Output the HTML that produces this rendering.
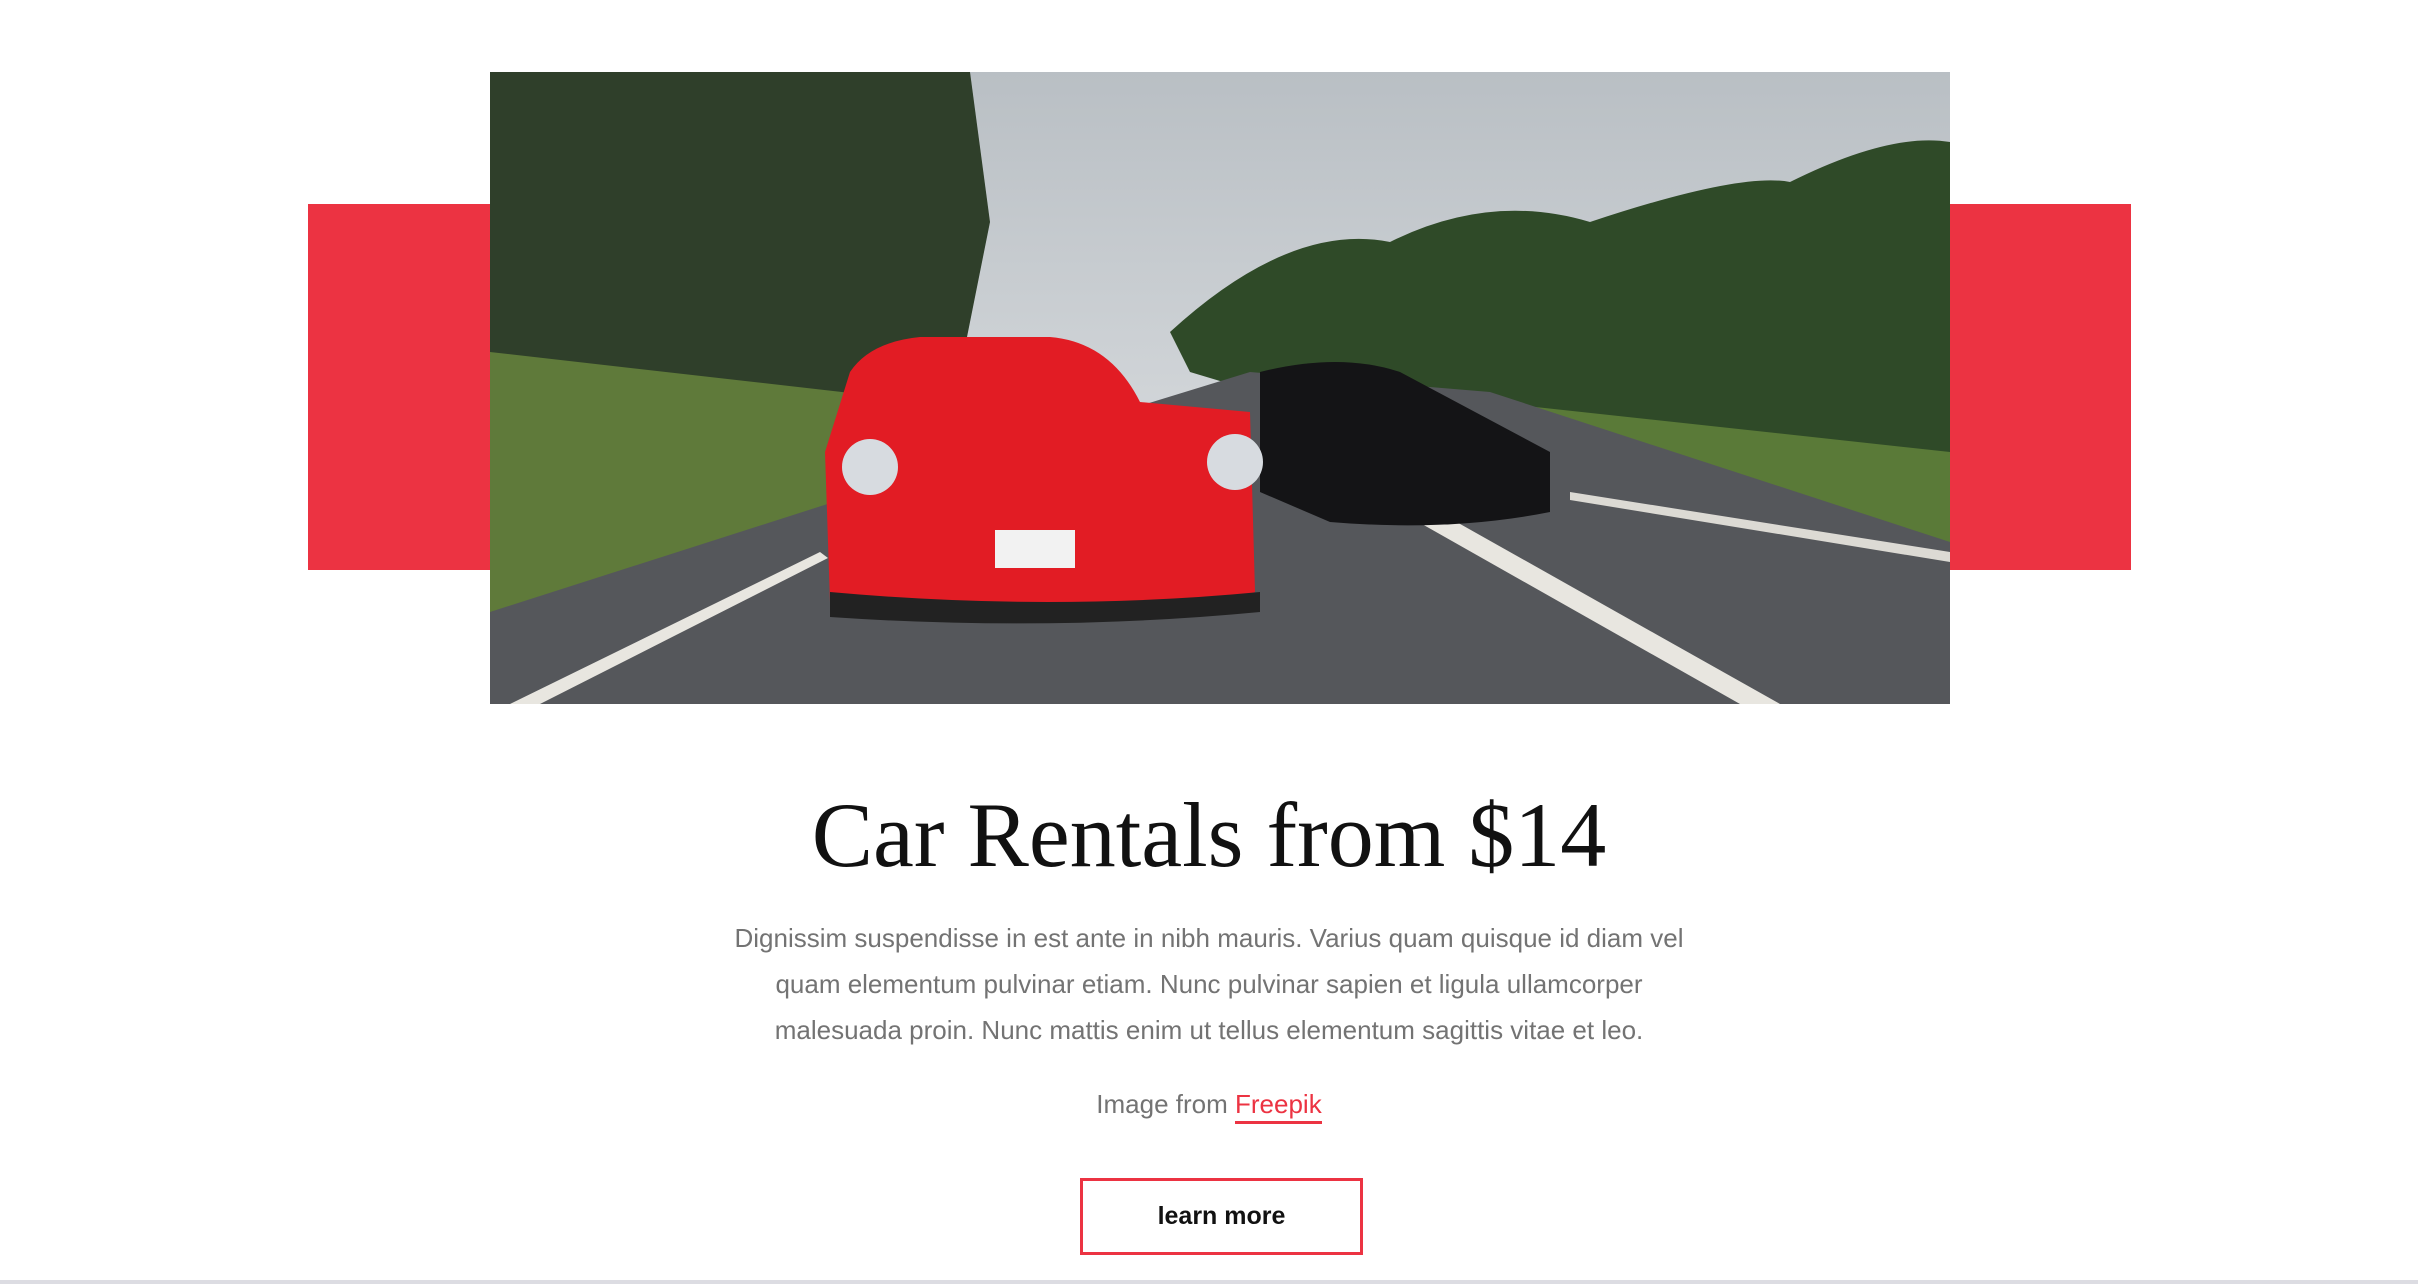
<!DOCTYPE html>
<html><head><meta charset="utf-8"><style>
html,body{margin:0;padding:0;background:#fff;width:2418px;height:1284px;overflow:hidden;position:relative;font-family:"Liberation Sans",sans-serif}
.red{position:absolute;background:#ec3342;top:204px;height:366px}
.photo{position:absolute;left:490px;top:72px;width:1460px;height:632px;overflow:hidden;background:#d4d7da}
.h1{position:absolute;left:0;width:2418px;top:775px;text-align:center;font-family:"Liberation Serif",serif;font-size:92px;color:#111;line-height:120px}
.p{position:absolute;left:724px;width:970px;top:915px;text-align:center;font-size:26px;line-height:46px;color:#737373}
.img{position:absolute;left:0;width:2418px;top:1089px;text-align:center;font-size:26px;color:#737373}
.img span{color:#ec3342;border-bottom:3px solid #ec3342;padding-bottom:2px}
.btn{position:absolute;left:1080px;top:1178px;width:277px;height:71px;border:3px solid #ec3342;text-align:center;line-height:71px;font-size:25px;font-weight:bold;color:#111}
.line{position:absolute;left:0;top:1280px;width:2418px;height:4px;background:#dcdce2}
</style></head><body>
<div class="red" style="left:308px;width:182px"></div>
<div class="red" style="left:1950px;width:181px"></div>
<div class="photo">
<svg width="1460" height="632" viewBox="0 0 1460 632">
<defs><linearGradient id="sky" x1="0" y1="0" x2="0" y2="1"><stop offset="0" stop-color="#b9bfc4"/><stop offset="1" stop-color="#e6e8ea"/></linearGradient></defs>
<rect width="1460" height="632" fill="url(#sky)"/>
<path d="M0 0 H480 L500 150 L470 300 L420 380 L0 520Z" fill="#2f3f2a"/>
<path d="M0 280 L440 330 L380 440 L0 560Z" fill="#5f7a3a"/>
<path d="M680 260 Q800 150 900 170 Q1000 120 1100 150 Q1250 100 1300 110 Q1400 60 1460 70 V470 L1100 420 L700 300Z" fill="#2f4a28"/>
<path d="M1000 330 L1460 380 V480 L1100 420Z" fill="#5a7a38"/>
<path d="M0 632 L0 540 L500 380 L760 300 L1000 320 L1460 470 V632Z" fill="#55575b"/>
<path d="M20 632 L330 480 L338 486 L50 632Z" fill="#e8e6e0"/>
<path d="M860 390 L1290 632 L1250 632 L840 400Z" fill="#e8e6e0"/>
<path d="M1080 420 L1460 480 V490 L1080 428Z" fill="#dcdad4"/>
<path d="M770 300 Q850 280 910 300 L1060 380 L1060 440 Q960 460 840 450 L770 420Z" fill="#141416"/>
<path d="M360 300 Q380 270 430 265 L560 265 Q620 270 650 330 L760 340 L765 520 Q700 545 560 548 Q380 550 340 530 L335 380Z" fill="#e21c24"/>
<rect x="505" y="458" width="80" height="38" fill="#f2f2f2"/>
<circle cx="380" cy="395" r="28" fill="#d7dbe0"/><circle cx="745" cy="390" r="28" fill="#d7dbe0"/>
<path d="M340 520 Q560 540 770 520 L770 540 Q560 560 340 545Z" fill="#222"/>
</svg>
</div>
<div class="h1">Car Rentals from $14</div>
<div class="p">Dignissim suspendisse in est ante in nibh mauris. Varius quam quisque id diam vel quam elementum pulvinar etiam. Nunc pulvinar sapien et ligula ullamcorper malesuada proin. Nunc mattis enim ut tellus elementum sagittis vitae et leo.</div>
<div class="img">Image from <span>Freepik</span></div>
<div class="btn">learn more</div>
<div class="line"></div>
</body></html>
